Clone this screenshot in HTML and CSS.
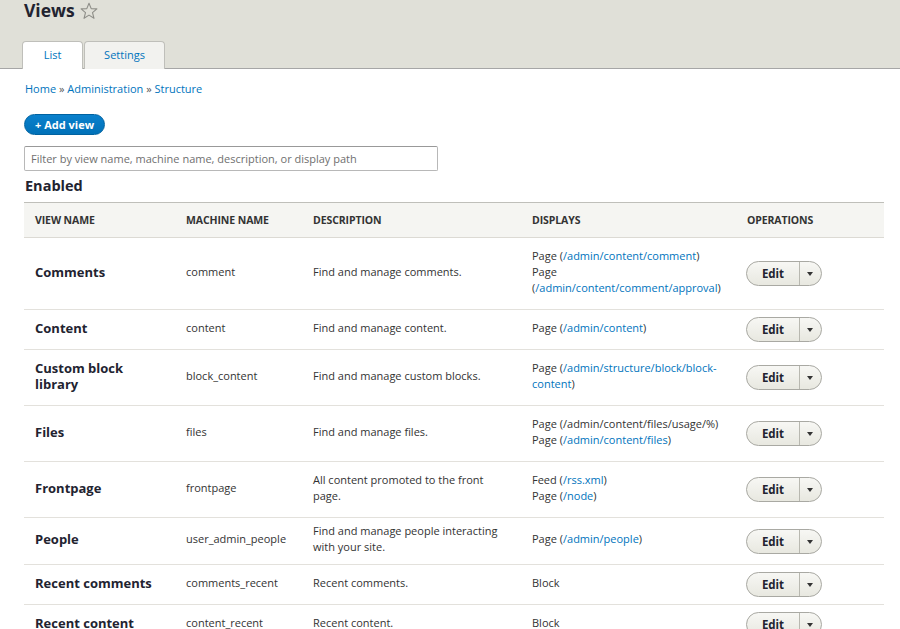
FILE: index.html
```html
<!DOCTYPE html>
<html lang="en">
<head>
<meta charset="utf-8">
<title>Views</title>
<link rel="stylesheet" href="styles.css">
</head>
<body>
<header class="page-header">
  <h1 class="page-title">Views <svg class="star" width="18" height="18" viewBox="0 0 18 18" aria-hidden="true"><polygon points="9,1.2 11.2,6.6 16.9,6.9 12.5,10.6 14,16.3 9,13.1 4,16.3 5.5,10.6 1.1,6.9 6.8,6.6" fill="none" stroke="#8e8e88" stroke-width="1.1" stroke-linejoin="round"/></svg></h1>
  <ul class="tabs">
    <li class="tab tab-active"><a href="#">List</a></li>
    <li class="tab"><a href="#">Settings</a></li>
  </ul>
</header>
<main class="content">
  <nav class="breadcrumb"><a href="#">Home</a> <span class="sep">»</span> <a href="#">Administration</a> <span class="sep">»</span> <a href="#">Structure</a></nav>
  <div class="actions"><a class="button-primary" href="#">+ Add view</a></div>
  <input class="filter" type="search" placeholder="Filter by view name, machine name, description, or display path">
  <h2 class="section-title">Enabled</h2>
  <table class="views-table">
    <colgroup>
      <col class="c1"><col class="c2"><col class="c3"><col class="c4"><col class="c5">
    </colgroup>
    <thead>
      <tr><th>View name</th><th>Machine name</th><th>Description</th><th>Displays</th><th>Operations</th></tr>
    </thead>
    <tbody>
      <tr>
        <td class="name">Comments</td><td>comment</td><td>Find and manage comments.</td>
        <td><ul class="displays"><li>Page (<a href="#">/admin/content/comment</a>)</li><li>Page (<a href="#">/admin/content/comment/approval</a>)</li></ul></td>
        <td class="ops"><div class="dropbutton"><span class="db-main">Edit</span><span class="db-toggle"><i class="arrow"></i></span></div></td>
      </tr>
      <tr>
        <td class="name">Content</td><td>content</td><td>Find and manage content.</td>
        <td><ul class="displays"><li>Page (<a href="#">/admin/content</a>)</li></ul></td>
        <td class="ops"><div class="dropbutton"><span class="db-main">Edit</span><span class="db-toggle"><i class="arrow"></i></span></div></td>
      </tr>
      <tr>
        <td class="name">Custom block library</td><td>block_content</td><td>Find and manage custom blocks.</td>
        <td><ul class="displays"><li>Page (<a href="#">/admin/structure/block/block-content</a>)</li></ul></td>
        <td class="ops"><div class="dropbutton"><span class="db-main">Edit</span><span class="db-toggle"><i class="arrow"></i></span></div></td>
      </tr>
      <tr>
        <td class="name">Files</td><td>files</td><td>Find and manage files.</td>
        <td><ul class="displays"><li>Page (/admin/content/files/usage/%)</li><li>Page (<a href="#">/admin/content/files</a>)</li></ul></td>
        <td class="ops"><div class="dropbutton"><span class="db-main">Edit</span><span class="db-toggle"><i class="arrow"></i></span></div></td>
      </tr>
      <tr>
        <td class="name">Frontpage</td><td>frontpage</td><td>All content promoted to the front page.</td>
        <td><ul class="displays"><li>Feed (<a href="#">/rss.xml</a>)</li><li>Page (<a href="#">/node</a>)</li></ul></td>
        <td class="ops"><div class="dropbutton"><span class="db-main">Edit</span><span class="db-toggle"><i class="arrow"></i></span></div></td>
      </tr>
      <tr>
        <td class="name">People</td><td>user_admin_people</td><td>Find and manage people interacting with your site.</td>
        <td><ul class="displays"><li>Page (<a href="#">/admin/people</a>)</li></ul></td>
        <td class="ops"><div class="dropbutton"><span class="db-main">Edit</span><span class="db-toggle"><i class="arrow"></i></span></div></td>
      </tr>
      <tr>
        <td class="name">Recent comments</td><td>comments_recent</td><td>Recent comments.</td>
        <td><ul class="displays"><li>Block</li></ul></td>
        <td class="ops"><div class="dropbutton"><span class="db-main">Edit</span><span class="db-toggle"><i class="arrow"></i></span></div></td>
      </tr>
      <tr>
        <td class="name">Recent content</td><td>content_recent</td><td>Recent content.</td>
        <td><ul class="displays"><li>Block</li></ul></td>
        <td class="ops"><div class="dropbutton"><span class="db-main">Edit</span><span class="db-toggle"><i class="arrow"></i></span></div></td>
      </tr>
    </tbody>
  </table>
</main>
</body>
</html>
```

FILE: styles.css
```css
html { overflow: hidden; }
body {
  margin: 0;
  font-family: "Open Sans", "DejaVu Sans", sans-serif;
  font-size: 11px;
  color: #333;
  background: #fff;
}
a { color: #0074bd; text-decoration: none; }

.page-header {
  background: #e0e0d8;
  border-bottom: 1px solid #a6a6a6;
  padding: 0 0 0 24px;
}
.page-title {
  margin: 0;
  font-size: 17.5px;
  line-height: 21px;
  height: 21px;
  font-weight: 700;
  color: #222330;
  display: flex;
  align-items: flex-start;
  gap: 6px;
}
.star { margin-top: 2px; margin-left: -1px; }

.tabs {
  list-style: none;
  margin: 20px 0 -1px -2px;
  padding: 0;
  display: flex;
  gap: 1px;
}
.tab {
  height: 28px;
  box-sizing: border-box;
  border: 1px solid #bfbfba;
  border-bottom: 0;
  border-radius: 4px 4px 0 0;
  background: #f2f2ef;
  display: flex;
  align-items: center;
  justify-content: center;
}
.tab a { font-size: 11px; margin-top: -2px; }
.tab-active { background: #fff; width: 61px; }
.tab:not(.tab-active) { width: 81px; }

.content { padding: 12px 16px 0 24px; }

.breadcrumb { line-height: 16px; height: 16px; margin-left: 1px; }
.breadcrumb .sep { color: #555; }

.actions { margin-top: 17px; height: 21px; }
.button-primary {
  display: inline-block;
  box-sizing: border-box;
  height: 21px;
  line-height: 19px;
  padding: 0 10px;
  border: 1px solid #0062a0;
  border-radius: 20px;
  background: linear-gradient(#0a80cc, #0071b8);
  color: #fff;
  font-weight: 700;
  font-size: 11px;
}

.filter {
  display: block;
  margin-top: 11px;
  width: 414px;
  height: 25px;
  box-sizing: border-box;
  border: 1px solid #b8b8b8;
  border-top-color: #999;
  border-radius: 2px;
  padding: 0 6px 1px;
  font-family: "Open Sans", "DejaVu Sans", sans-serif;
  font-size: 11px;
  color: #333;
  background: #fff;
  outline: none;
  -webkit-appearance: none;
  appearance: none;
}
.filter::placeholder { color: #6f6f6f; }

.section-title {
  margin: 6px 0 7px 1px;
  font-size: 14.5px;
  line-height: 18px;
  font-weight: 700;
  color: #222330;
}

.views-table {
  width: 860px;
  table-layout: fixed;
  border-collapse: collapse;
  border-spacing: 0;
}
.c1 { width: 151px; }
.c2 { width: 127px; }
.c3 { width: 219px; }
.c4 { width: 215px; }
.c5 { width: 148px; }

.views-table thead tr {
  background: #f5f5f2;
  border-top: 1px solid #bfbfba;
  border-bottom: 1px solid #dcdad4;
}
.views-table th {
  height: 34px;
  padding: 0 11px;
  text-align: left;
  text-transform: uppercase;
  font-size: 10.5px;
  font-weight: 700;
  color: #333;
  letter-spacing: -0.1px;
}
.views-table tbody tr { border-bottom: 1px solid #e3e1dc; }
.views-table td {
  padding: 5px 8px 9px 11px;
  vertical-align: middle;
  line-height: 16px;
}
.views-table td.ops { padding: 7px 8px 7px 10px; }
.views-table td.name {
  font-size: 13px;
  font-weight: 700;
  color: #222330;
  line-height: 16px;
}

.displays {
  list-style: none;
  margin: 4.5px 0;
  padding: 0;
}

.dropbutton {
  display: inline-flex;
  width: 76px;
  height: 25px;
  box-sizing: border-box;
  border: 1px solid #a9a9a3;
  border-radius: 20px;
  background: linear-gradient(#f7f7f4, #e8e8e0);
  vertical-align: middle;
}
.db-main {
  width: 52px;
  text-align: center;
  font-weight: 700;
  font-size: 11.5px;
  line-height: 23px;
  color: #222330;
}
.db-toggle {
  flex: 1;
  border-left: 1px solid #b8b8b0;
  display: flex;
  align-items: center;
  justify-content: center;
}
.arrow {
  width: 0;
  height: 0;
  border-top: 4px solid #333;
  border-left: 3.5px solid transparent;
  border-right: 3.5px solid transparent;
  margin-top: 1px;
  margin-right: 2px;
}
```
